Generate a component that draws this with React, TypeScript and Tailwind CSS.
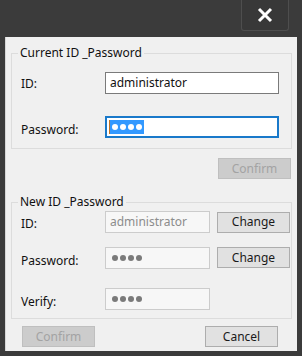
const Btn = ({ label, disabled, className }: { label: string; disabled?: boolean; className?: string }) => (
    <div
        className={`flex h-[21px] w-[73px] items-center justify-center border text-[12px] ${
            disabled ? "border-[#bfbfbf] bg-[#cccccc] text-[#a3a3a3]" : "border-[#adadad] bg-[#e1e1e1] text-[#1a1a1a]"
        } ${className ?? ""}`}
    >
        {label}
    </div>
);

const Dots = ({ color }: { color: string }) => (
    <span className="flex gap-[2px]">
        {[0, 1, 2, 3].map((i) => (
            <span key={i} className={`h-[6px] w-[6px] rounded-full ${color}`} />
        ))}
    </span>
);

export default function App() {
    return (
        <div
            className="flex h-[356px] w-[302px] flex-col bg-[#3b3b3b] text-[12px] leading-[16px] text-[#111]"
            style={{ fontFamily: '"Noto Sans", "Open Sans", sans-serif' }}
        >
            {/* Title bar */}
            <div className="flex h-[37px] justify-end pr-[13px]">
                <div className="flex h-[31px] w-[48px] items-center justify-center rounded-b-[3px] border border-t-0 border-[#4e4e4e] bg-[#383838]">
                    <svg width="16" height="16" viewBox="0 0 16 16">
                        <path d="M2 2 L14 14 M14 2 L2 14" stroke="#ffffff" strokeWidth="3" />
                    </svg>
                </div>
            </div>

            {/* Body */}
            <div className="ml-[5px] flex h-[314px] w-[292px] flex-col border-l border-[#d6d6d6] bg-[#f0f0f0]">
                <fieldset className="ml-[5px] mt-[8px] w-[281px] border border-[#dcdcdc] pb-[10px]">
                    <legend className="ml-[6px] px-[2px] leading-[16px]">Current ID _Password</legend>
                    <div className="mt-[11px] flex h-[22px] items-center">
                        <span className="w-[93px] pl-[9px] pt-[2px]">ID:</span>
                        <div className="flex h-[22px] w-[174px] items-center border border-[#7a7a7a] bg-white pl-[4px]">
                            administrator
                        </div>
                    </div>
                    <div className="mt-[22px] flex h-[22px] items-center">
                        <span className="w-[93px] pl-[9px] pt-[6px]">Password:</span>
                        <div className="flex h-[22px] w-[174px] items-center border-2 border-[#1979ca] bg-white pl-[2px]">
                            <span className="flex h-[14px] items-center border-l border-[#c07020] bg-[#3399ff] px-[2px]">
                                <Dots color="bg-white" />
                            </span>
                        </div>
                    </div>
                </fieldset>

                <div className="mt-[9px] flex justify-end pr-[6px]">
                    <Btn label="Confirm" disabled />
                </div>

                <fieldset className="ml-[5px] mt-[15px] w-[281px] border border-[#dcdcdc] pb-[8px]">
                    <legend className="ml-[6px] px-[2px] leading-[16px]">New ID _Password</legend>
                    <div className="mt-[1px] flex h-[22px] items-center">
                        <span className="w-[93px] pl-[9px] pt-[4px]">ID:</span>
                        <div className="flex h-[22px] w-[105px] items-center border border-[#cccccc] bg-[#f7f7f7] pl-[4px] text-[#8c8c8c]">
                            administrator
                        </div>
                        <Btn label="Change" className="ml-[7px]" />
                    </div>
                    <div className="mt-[14px] flex h-[22px] items-center">
                        <span className="w-[93px] pl-[9px] pt-[6px]">Password:</span>
                        <div className="flex h-[22px] w-[105px] items-center border border-[#cccccc] bg-[#f7f7f7] pl-[6px]">
                            <Dots color="bg-[#7a7a7a]" />
                        </div>
                        <Btn label="Change" className="ml-[7px] self-start" />
                    </div>
                    <div className="mt-[19px] flex h-[22px] items-center">
                        <span className="w-[93px] pl-[9px] pt-[6px]">Verify:</span>
                        <div className="flex h-[22px] w-[105px] items-center border border-[#cccccc] bg-[#f7f7f7] pl-[6px]">
                            <Dots color="bg-[#7a7a7a]" />
                        </div>
                    </div>
                </fieldset>

                <div className="mt-[7px] flex justify-between pl-[16px] pr-[19px]">
                    <Btn label="Confirm" disabled />
                    <Btn label="Cancel" />
                </div>
            </div>
        </div>
    );
}
